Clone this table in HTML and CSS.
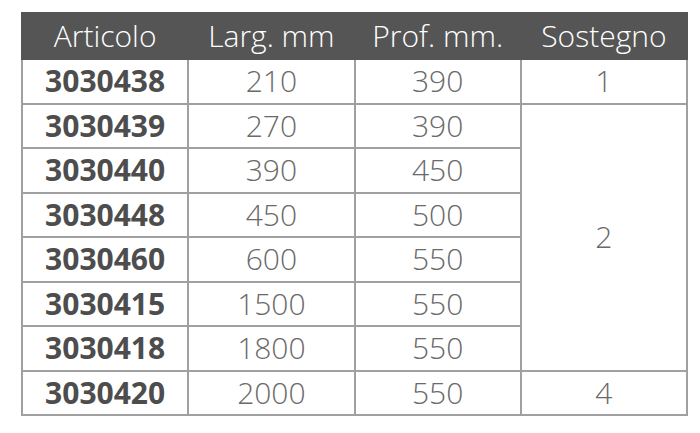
FILE: index.html
```html
<!DOCTYPE html>
<html>
<head>
<meta charset="utf-8">
<link rel="stylesheet" href="styles.css">
</head>
<body>
<div class="wrap">
<table class="spec">
<thead>
<tr><th>Articolo</th><th>Larg. mm</th><th>Prof. mm.</th><th>Sostegno</th></tr>
</thead>
<tbody>
<tr><td class="code">3030438</td><td>210</td><td>390</td><td>1</td></tr>
<tr><td class="code">3030439</td><td>270</td><td>390</td><td rowspan="6">2</td></tr>
<tr><td class="code">3030440</td><td>390</td><td>450</td></tr>
<tr><td class="code">3030448</td><td>450</td><td>500</td></tr>
<tr><td class="code">3030460</td><td>600</td><td>550</td></tr>
<tr><td class="code">3030415</td><td>1500</td><td>550</td></tr>
<tr><td class="code">3030418</td><td>1800</td><td>550</td></tr>
<tr><td class="code">3030420</td><td>2000</td><td>550</td><td>4</td></tr>
</tbody>
</table>
</div>
</body>
</html>
```
FILE: styles.css
```css
html, body {
  margin: 0;
  padding: 0;
  background: #ffffff;
}
.wrap {
  padding: 12px 0 0 21px;
}
.spec {
  border-collapse: collapse;
  table-layout: fixed;
  width: 667px;
  font-family: "Open Sans", "Liberation Sans", sans-serif;
  font-size: 30px;
  font-weight: 300;
  color: #6a6a6a;
}
.spec th {
  background: #555555;
  color: #ffffff;
  font-weight: 300;
  height: 44px;
  padding: 0;
  line-height: 1;
  text-align: center;
  border: 2px solid #555555;
}
.spec td {
  height: 42.5px;
  padding: 0;
  line-height: 1;
  text-align: center;
  border: 2px solid #a0a0a0;
}
.spec td.code {
  font-weight: 700;
  color: #4d4d4d;
}
```
